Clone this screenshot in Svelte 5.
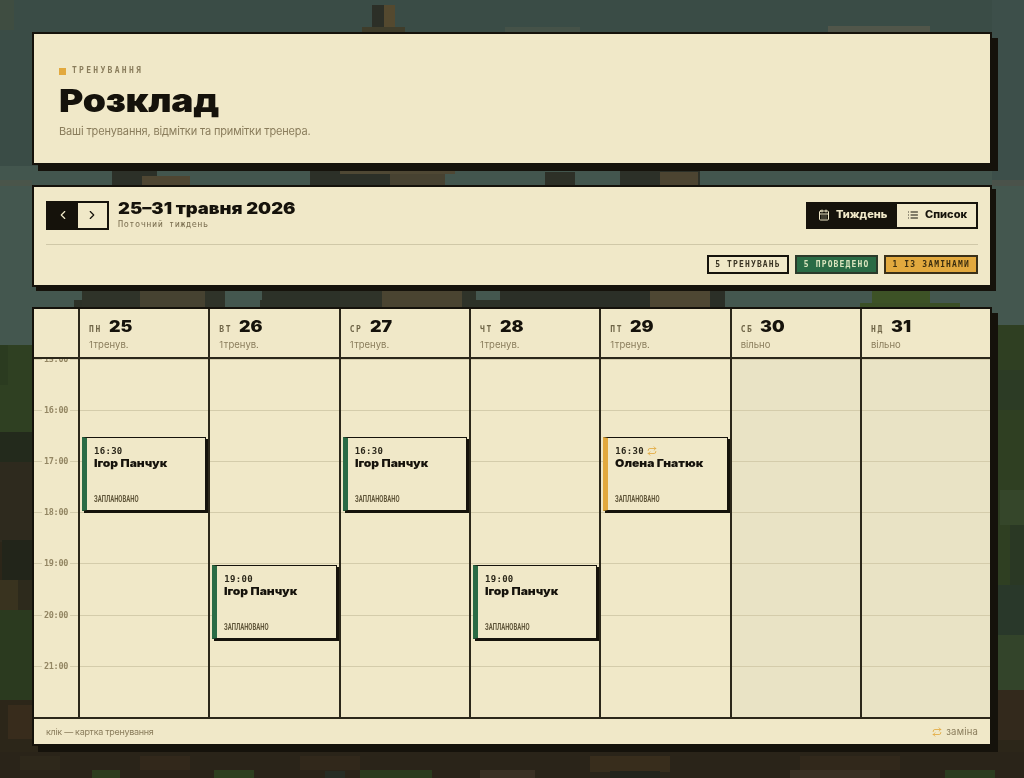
<script>
    const hourHeight = 51.2;
    const firstHour = 15;
    const hours = [15, 16, 17, 18, 19, 20, 21];

    const days = [
        { short: "пн", num: 25, note: "1 тренув.", events: [{ time: "16:30", start: 16.5, name: "Ігор Панчук" }] },
        { short: "вт", num: 26, note: "1 тренув.", events: [{ time: "19:00", start: 19, name: "Ігор Панчук" }] },
        { short: "ср", num: 27, note: "1 тренув.", events: [{ time: "16:30", start: 16.5, name: "Ігор Панчук" }] },
        { short: "чт", num: 28, note: "1 тренув.", events: [{ time: "19:00", start: 19, name: "Ігор Панчук" }] },
        { short: "пт", num: 29, note: "1 тренув.", events: [{ time: "16:30", start: 16.5, name: "Олена Гнатюк", swap: true }] },
        { short: "сб", num: 30, note: "вільно", off: true, events: [] },
        { short: "нд", num: 31, note: "вільно", off: true, events: [] },
    ];

    function eventTop(start) {
        return (start - firstHour) * hourHeight + 1.5;
    }

    // pixel landscape behind the cards: x, y, w, h, colour
    const scenery = [
        [0, 0, 1024, 186, "#3a4c46"],
        [0, 166, 1024, 20, "#43564e"],
        [0, 0, 14, 30, "#3f4d41"],
        [0, 180, 32, 26, "#4a554a"],
        [992, 180, 32, 26, "#4a524a"],
        [0, 186, 1024, 160, "#44574f"],
        [992, 0, 32, 180, "#3d4f4a"],
        [0, 345, 1024, 100, "#2f4022"],
        [992, 325, 32, 120, "#2f3f22"],
        [998, 370, 26, 40, "#2c3b25"],
        [0, 345, 8, 40, "#2b3b20"],
        [0, 432, 34, 30, "#232a1c"],
        [992, 445, 32, 245, "#2f3f22"],
        [1000, 490, 24, 35, "#35462a"],
        [1010, 525, 14, 60, "#2a3824"],
        [998, 585, 26, 50, "#29382a"],
        [998, 635, 26, 55, "#33442a"],
        [0, 462, 34, 80, "#2e2a1e"],
        [2, 540, 32, 40, "#22251a"],
        [0, 580, 18, 30, "#39331f"],
        [18, 580, 16, 30, "#2d2a1c"],
        [0, 610, 34, 90, "#2b3a1f"],
        [0, 700, 1024, 78, "#2c2619"],
        [992, 690, 32, 50, "#33291c"],
        [8, 705, 24, 34, "#382c1c"],
        [0, 752, 1024, 26, "#2a2419"],
        [20, 756, 40, 14, "#2e281b"],
        [140, 756, 50, 14, "#32281b"],
        [300, 756, 60, 14, "#31281b"],
        [590, 756, 80, 16, "#382d1c"],
        [800, 756, 100, 14, "#31281b"],
        [92, 770, 28, 8, "#2c3d1e"],
        [214, 770, 40, 8, "#2d3f1f"],
        [325, 771, 20, 7, "#262c24"],
        [360, 770, 72, 8, "#2a3c1e"],
        [480, 770, 55, 8, "#3a3024"],
        [610, 771, 50, 7, "#22241c"],
        [790, 770, 90, 8, "#3a3024"],
        [945, 770, 50, 8, "#2a3c1f"],
        // gap above the first card
        [372, 5, 12, 27, "#2c2f27"],
        [384, 5, 11, 27, "#54492f"],
        [362, 27, 43, 6, "#3f3d2b"],
        [505, 27, 75, 6, "#455248"],
        [828, 26, 102, 7, "#51564a"],
        // gap under the first card
        [112, 166, 45, 20, "#2c3028"],
        [142, 176, 48, 10, "#4f4632"],
        [310, 166, 90, 20, "#2c3028"],
        [340, 166, 115, 8, "#4f4834"],
        [390, 174, 55, 12, "#474231"],
        [545, 172, 30, 14, "#2d3027"],
        [620, 166, 80, 20, "#2c3028"],
        [660, 172, 38, 14, "#4c4431"],
        // gap under the second card
        [82, 288, 143, 19, "#2f3329"],
        [140, 288, 65, 19, "#464231"],
        [74, 300, 8, 7, "#2d3228"],
        [260, 300, 80, 7, "#2d3228"],
        [262, 288, 78, 12, "#2c3128"],
        [340, 288, 130, 19, "#2f3329"],
        [382, 288, 80, 19, "#4a4431"],
        [470, 288, 6, 19, "#2d3228"],
        [476, 300, 24, 7, "#2d3228"],
        [500, 288, 225, 19, "#2b2f27"],
        [650, 288, 60, 19, "#4e4733"],
        [860, 303, 100, 4, "#3b4f26"],
        [872, 288, 58, 15, "#3d5226"],
    ];
</script>

<svg class="scenery" width="1024" height="778" shape-rendering="crispEdges" aria-hidden="true">
    {#each scenery as [x, y, w, h, fill]}
        <rect {x} {y} width={w} height={h} {fill} />
    {/each}
</svg>

{#snippet repeatIcon(size)}
    <svg class="swap" width={size} height={size} viewBox="0 0 24 24">
        <path d="m17 2 4 4-4 4" />
        <path d="M3 11v-1a4 4 0 0 1 4-4h14" />
        <path d="m7 22-4-4 4-4" />
        <path d="M21 13v1a4 4 0 0 1-4 4H3" />
    </svg>
{/snippet}

<main class="page">
    <header class="card intro">
        <div class="eyebrow"><i></i>ТРЕНУВАННЯ</div>
        <h1>Розклад</h1>
        <p>Ваші тренування, відмітки та примітки тренера.</p>
    </header>

    <section class="card toolbar">
        <div class="toolbar-top">
            <div class="nav">
                <button class="active" aria-label="Назад">
                    <svg width="14" height="14" viewBox="0 0 24 24"><path d="m15 18-6-6 6-6" /></svg>
                </button>
                <button aria-label="Вперед">
                    <svg width="14" height="14" viewBox="0 0 24 24"><path d="m9 18 6-6-6-6" /></svg>
                </button>
            </div>
            <div class="range">
                <h2>25–31 травня 2026</h2>
                <span>Поточний тиждень</span>
            </div>
            <div class="views">
                <button class="active">
                    <svg width="12" height="12" viewBox="0 0 24 24">
                        <path d="M8 2v4M16 2v4M3 10h18" />
                        <rect x="3" y="4" width="18" height="18" rx="2" />
                        <path d="M8 14h.01M12 14h.01M16 14h.01M8 18h.01M12 18h.01M16 18h.01" />
                    </svg>
                    <span>Тиждень</span>
                </button>
                <button>
                    <svg width="12" height="12" viewBox="0 0 24 24">
                        <path d="M3 6h.01M3 12h.01M3 18h.01M8 6h13M8 12h13M8 18h13" />
                    </svg>
                    <span>Список</span>
                </button>
            </div>
        </div>
        <div class="pills">
            <span class="pill">5 ТРЕНУВАНЬ</span>
            <span class="pill done">5 ПРОВЕДЕНО</span>
            <span class="pill swapped">1 ІЗ ЗАМІНАМИ</span>
        </div>
    </section>

    <section class="card calendar">
        <div class="head">
            <div class="corner"></div>
            {#each days as day}
                <div class="day-head">
                    <div class="day-title"><span>{day.short}</span><b>{day.num}</b></div>
                    <small>{day.note}</small>
                </div>
            {/each}
        </div>

        <div class="body">
            <div class="times">
                {#each hours as hour}
                    <div class="tick"><span>{hour}:00</span></div>
                {/each}
            </div>
            {#each days as day}
                <div class="column" class:off={day.off}>
                    {#each hours as hour}
                        <div class="slot"></div>
                    {/each}
                    {#each day.events as ev}
                        <article class="event" class:amber={ev.swap} style="top: {eventTop(ev.start)}px">
                            <div class="event-time">{ev.time}{#if ev.swap}{@render repeatIcon(10)}{/if}</div>
                            <div class="event-name">{ev.name}</div>
                            <div class="event-status">ЗАПЛАНОВАНО</div>
                        </article>
                    {/each}
                </div>
            {/each}
        </div>

        <footer class="legend">
            <span>клік — картка тренування</span>
            <span class="legend-swap">{@render repeatIcon(10)}заміна</span>
        </footer>
    </section>
</main>

<style>
    :global(body) {
        background: #2c2619;
        overflow: hidden;
    }

    :global(*) {
        box-sizing: border-box;
    }

    .scenery {
        position: fixed;
        left: 0;
        top: 0;
    }

    .page {
        position: relative;
        display: flex;
        flex-direction: column;
        gap: 20px;
        height: 778px;
        padding: 32px;
        font-family: Inter, "Noto Sans", sans-serif;
        color: #15120b;
    }

    .card {
        background: #f0e8c8;
        border: 2px solid #15120b;
        box-shadow: 6px 6px 0 #15120b;
    }

    /* intro */
    .intro {
        height: 134px;
        padding: 32px 25px 0;
    }

    .eyebrow {
        display: flex;
        align-items: center;
        gap: 6px;
        font: 700 8px/10px "DejaVu Sans Mono", monospace;
        letter-spacing: 2.3px;
        color: #8a7d5c;
    }

    .eyebrow i {
        width: 7px;
        height: 7px;
        background: #e2a93e;
    }

    h1 {
        width: fit-content;
        margin: 6px 0 0;
        font: 900 32px/38px Inter, sans-serif;
        letter-spacing: -0.2px;
        transform: scaleX(1.16);
        transform-origin: left;
    }

    .intro p {
        margin: 3px 0 0;
        font-size: 11px;
        line-height: 16px;
        letter-spacing: -0.15px;
        color: #8a7d5c;
    }

    /* toolbar */
    .toolbar {
        height: 102px;
        padding: 13px 12px 0;
        box-shadow: 4px 4px 0 #15120b;
    }

    .toolbar-top {
        display: flex;
        align-items: center;
        height: 30px;
    }

    button {
        display: flex;
        align-items: center;
        justify-content: center;
        background: none;
        border: 0;
        padding: 0;
        color: #15120b;
    }

    button svg,
    .swap {
        fill: none;
        stroke: currentColor;
        stroke-width: 2;
        stroke-linecap: round;
        stroke-linejoin: round;
    }

    .nav {
        display: flex;
        height: 29px;
        border: 2px solid #15120b;
    }

    .nav button {
        width: 29.5px;
    }

    button.active {
        background: #15120b;
        color: #f0e8c8;
    }

    .range {
        margin-left: 9px;
    }

    h2 {
        width: fit-content;
        margin: 0;
        font: 900 16px/16px Inter, sans-serif;
        transform: scaleX(1.15);
        transform-origin: left;
    }

    .range span {
        display: block;
        margin-top: 3px;
        font: 400 8.5px/11px "DejaVu Sans Mono", monospace;
        letter-spacing: 0.55px;
        color: #7a6e50;
    }

    .views {
        display: flex;
        height: 27px;
        margin-left: auto;
        border: 2px solid #15120b;
    }

    .views button {
        justify-content: flex-start;
        gap: 6px;
        padding-left: 10px;
        font: 800 10.5px/12px Inter, sans-serif;
    }

    .views button span {
        display: inline-block;
        transform: scaleX(1.05);
        transform-origin: left;
    }

    .views button:first-child {
        width: 89px;
    }

    .views button:last-child {
        width: 79px;
    }

    .pills {
        display: flex;
        justify-content: flex-end;
        gap: 6px;
        margin-top: 14px;
        padding-top: 10px;
        border-top: 1px solid #d0c8a8;
    }

    .pill {
        display: flex;
        align-items: center;
        height: 19px;
        padding: 0 6px;
        border: 2px solid #15120b;
        font: 700 8px/10px "DejaVu Sans Mono", monospace;
        letter-spacing: 1.15px;
        color: #3a3424;
    }

    .pill.done {
        padding: 0 7px;
        background: #2a6b45;
        color: #d9e4bd;
        border-color: #2b3a2a;
    }

    .pill.swapped {
        background: #e2a93e;
        border-color: #3a3018;
        color: #3a2d10;
    }

    /* calendar */
    .calendar {
        flex: 1;
        display: flex;
        flex-direction: column;
    }

    .head,
    .body {
        display: grid;
        grid-template-columns: 46px repeat(6, 130.33px) 1fr;
    }

    .head {
        height: 50px;
        border-bottom: 2px solid #2b271a;
    }

    .corner,
    .day-head,
    .times,
    .column {
        border-right: 2px solid #2b271a;
    }

    .day-head:last-child,
    .column:last-child {
        border-right: 0;
    }

    .day-head {
        padding: 8px 9px 0;
    }

    .day-title {
        display: flex;
        align-items: baseline;
        gap: 7px;
    }

    .day-title span {
        font: 700 8px/10px "DejaVu Sans Mono", monospace;
        letter-spacing: 1.6px;
        text-transform: uppercase;
        color: #6f6548;
    }

    .day-title b {
        font: 900 15.5px/20px Inter, sans-serif;
        transform: scaleX(1.15);
        transform-origin: left;
    }

    .day-head small {
        display: block;
        margin-top: 2px;
        font-size: 9.5px;
        line-height: 12px;
        word-spacing: -2px;
        color: #8a7d5c;
    }

    .body {
        flex: 1;
        min-height: 0;
        overflow: hidden;
    }

    .tick,
    .slot {
        height: 51.2px;
        border-top: 1px solid #d4ccab;
    }

    .tick span {
        display: block;
        width: 28px;
        margin: -7px auto 0;
        background: #f0e8c8;
        text-align: center;
        font: 700 8.5px/12px "DejaVu Sans Mono", monospace;
        letter-spacing: -0.3px;
        color: #938663;
    }

    .column {
        position: relative;
    }

    .column.off {
        background: #e9e3c5;
    }

    .event {
        position: absolute;
        left: 2px;
        right: 2px;
        height: 74px;
        display: flex;
        flex-direction: column;
        padding: 8px 6px 6px 7px;
        background: #f0e8c8;
        border: 1.5px solid #15120b;
        border-left: 5px solid #2a6b45;
        box-shadow: 2px 2px 0 #15120b;
    }

    .event.amber {
        border-left-color: #e2a93e;
    }

    .event-time {
        display: flex;
        align-items: center;
        gap: 3px;
        font: 700 9px/11px "DejaVu Sans Mono", monospace;
        letter-spacing: 0.3px;
        color: #2b271a;
    }

    .event-name {
        width: fit-content;
        font: 900 11px/13px Inter, sans-serif;
        transform: scaleX(1.1);
        transform-origin: left;
    }

    .event-status {
        width: fit-content;
        margin-top: auto;
        font: 700 8.5px/9px Roboto, sans-serif;
        color: #5e5438;
        transform: scaleX(0.7);
        transform-origin: left;
    }

    .swap {
        color: #e2a93e;
    }

    .legend {
        display: flex;
        align-items: center;
        justify-content: space-between;
        height: 27px;
        padding: 0 12px;
        border-top: 2px solid #2b271a;
        font-size: 9px;
        letter-spacing: -0.3px;
        color: #8a7d5c;
    }

    .legend-swap {
        display: flex;
        align-items: center;
        gap: 4px;
        font-size: 9.5px;
        letter-spacing: 0.2px;
    }
</style>
